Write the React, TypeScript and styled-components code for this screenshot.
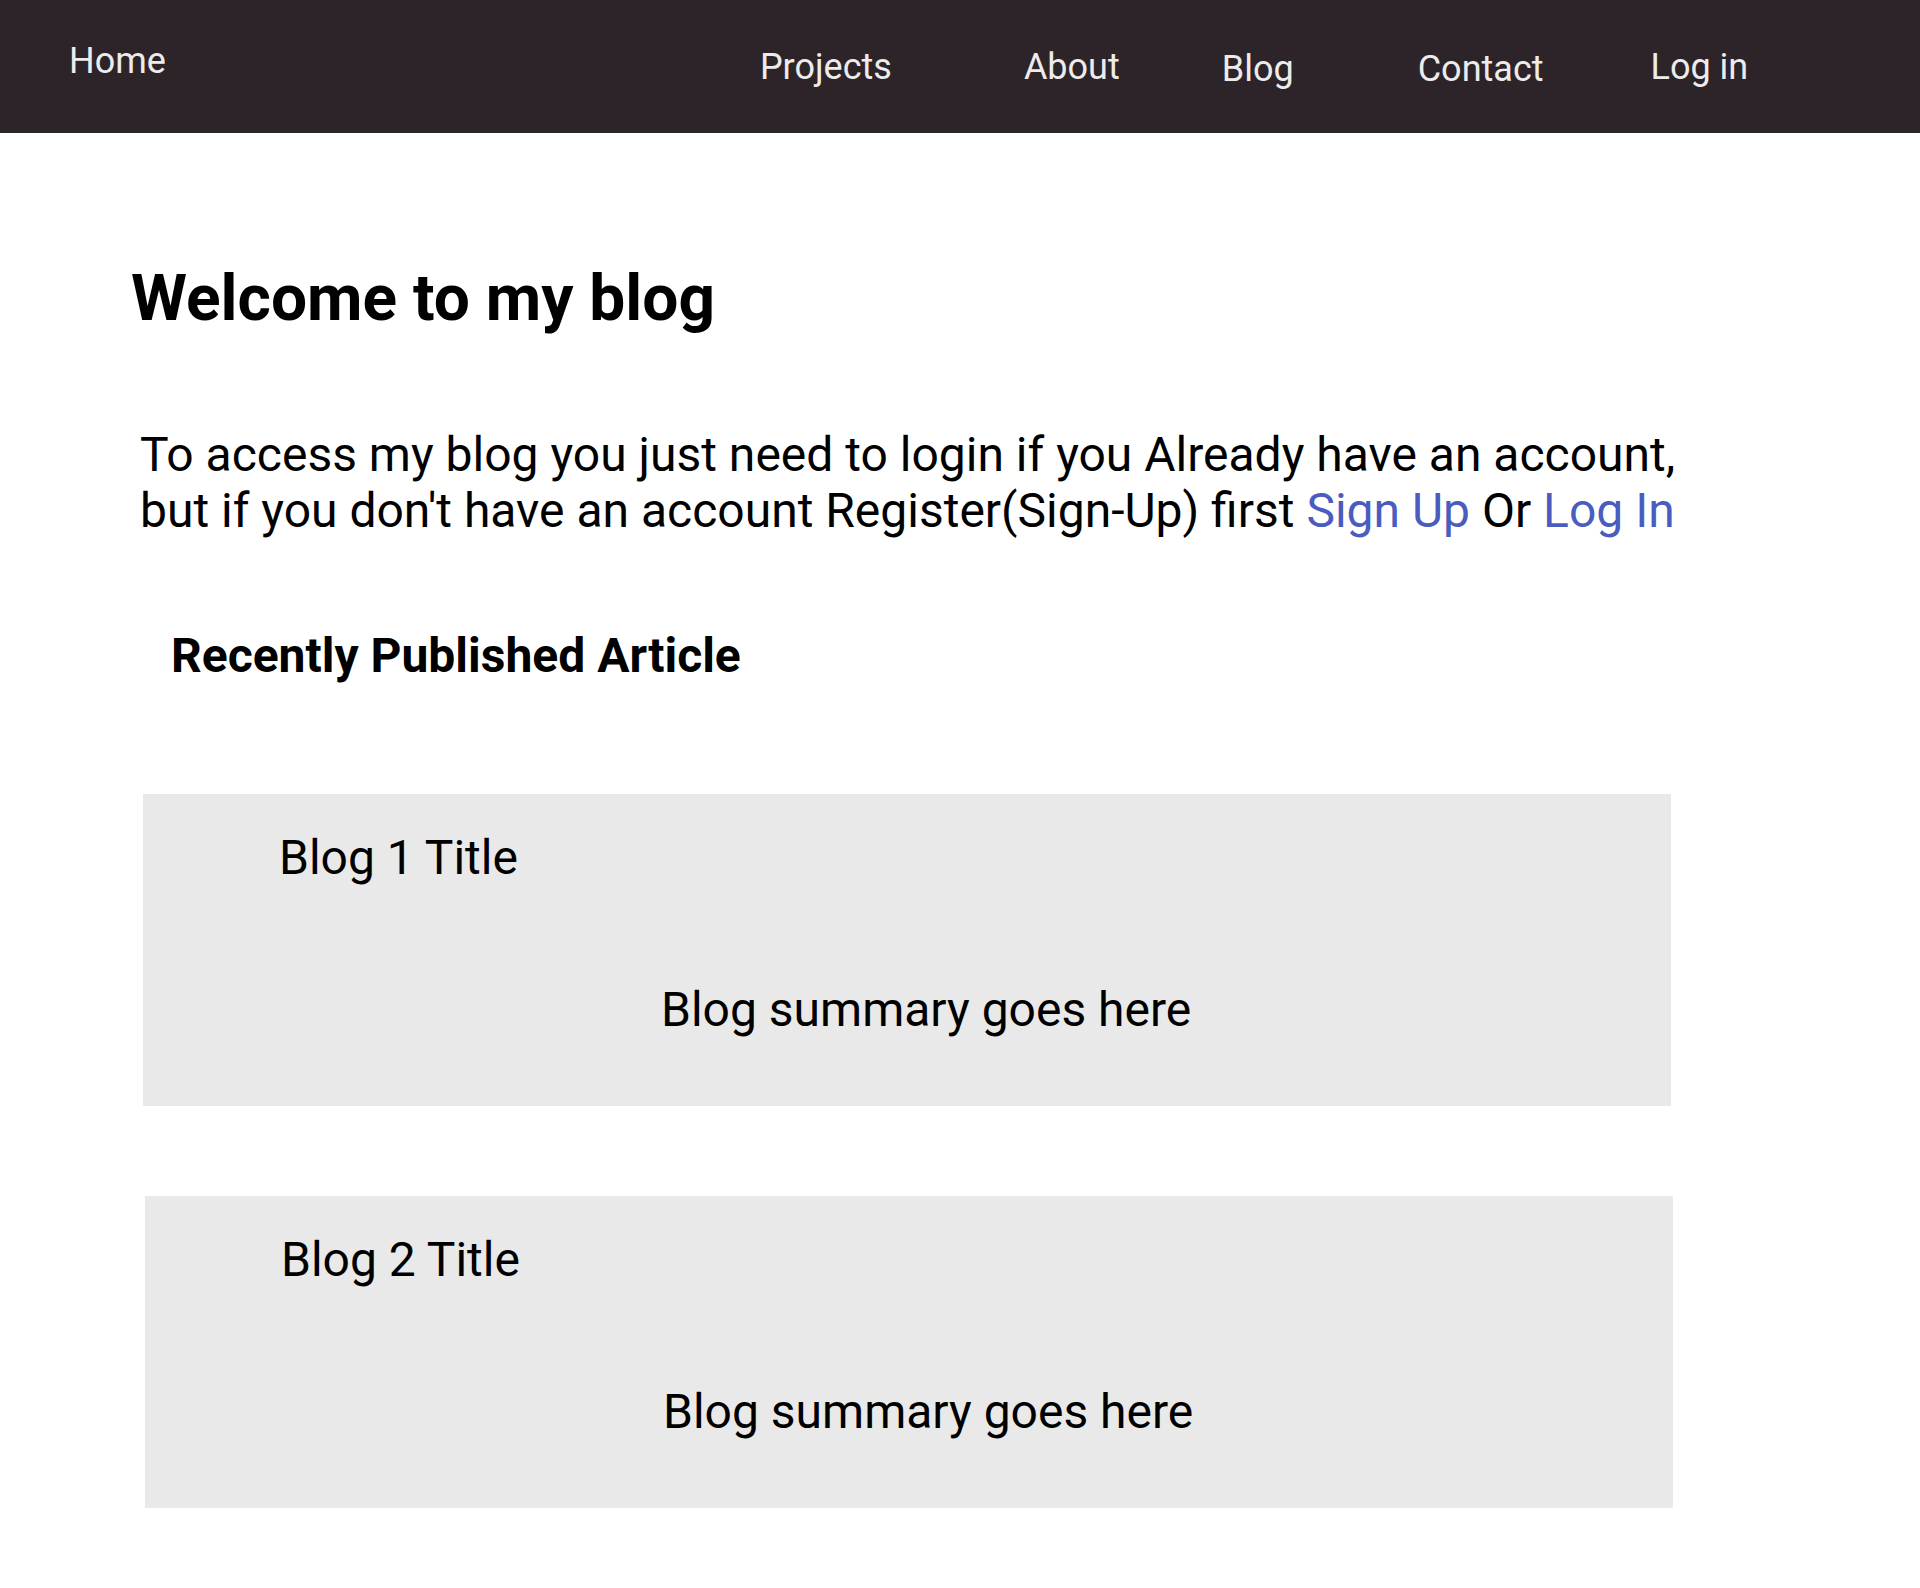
import React from "react";
import styled, { createGlobalStyle } from "styled-components";

const GlobalStyle = createGlobalStyle`
  html, body {
    margin: 0;
    padding: 0;
    background: #ffffff;
  }
  body {
    font-family: Roboto, "Liberation Sans", Arial, sans-serif;
    color: #000000;
  }
  * { box-sizing: border-box; }
`;

const Page = styled.div`
  width: 1920px;
  min-height: 1588px;
  background: #ffffff;
`;

const NavBar = styled.nav`
  display: flex;
  align-items: flex-start;
  height: 133px;
  padding-left: 69px;
  background: #2d2429;
`;

const NavItem = styled.a<{ $ml: number; $mt: number }>`
  display: block;
  margin-left: ${(p) => p.$ml}px;
  margin-top: ${(p) => p.$mt}px;
  font-size: 36px;
  line-height: 42px;
  color: #ececec;
  text-decoration: none;
  white-space: nowrap;
  cursor: pointer;
`;

const Main = styled.main`
  display: flex;
  flex-direction: column;
  align-items: flex-start;
`;

const Heading = styled.h1`
  margin: 128px 0 0 131px;
  font-size: 64px;
  line-height: 75px;
  font-weight: 700;
`;

const Intro = styled.p`
  margin: 91px 0 0 140px;
  font-size: 48px;
  line-height: 56px;
  font-weight: 400;
  white-space: nowrap;
`;

const TextLink = styled.a`
  color: #4a5dbf;
  text-decoration: none;
  cursor: pointer;
`;

const SectionTitle = styled.h2`
  margin: 89px 0 0 171px;
  font-size: 48px;
  line-height: 56px;
  font-weight: 700;
`;

const CardList = styled.section`
  display: flex;
  flex-direction: column;
  gap: 90px;
  margin-top: 110px;
`;

const Card = styled.article<{ $inset: number }>`
  display: flex;
  flex-direction: column;
  width: 1528px;
  margin-left: ${(p) => p.$inset}px;
  padding: 36px 0 68px 0;
  background: #e9e9e9;
`;

const CardTitle = styled.h3`
  margin: 0 0 0 136px;
  font-size: 48px;
  line-height: 56px;
  font-weight: 400;
`;

const CardSummary = styled.p`
  margin: 96px 0 0 518px;
  font-size: 48px;
  line-height: 56px;
  font-weight: 400;
`;

const navItems = [
  { label: "Home", ml: 0, mt: 40 },
  { label: "Projects", ml: 594, mt: 46 },
  { label: "About", ml: 132, mt: 46 },
  { label: "Blog", ml: 102, mt: 48 },
  { label: "Contact", ml: 124, mt: 48 },
  { label: "Log in", ml: 107, mt: 46 },
];

const posts = [
  { title: "Blog 1 Title", summary: "Blog summary goes here", inset: 143 },
  { title: "Blog 2 Title", summary: "Blog summary goes here", inset: 145 },
];

export default function App() {
  return (
    <>
      <GlobalStyle />
      <Page>
        <NavBar>
          {navItems.map((item) => (
            <NavItem key={item.label} $ml={item.ml} $mt={item.mt}>
              {item.label}
            </NavItem>
          ))}
        </NavBar>
        <Main>
          <Heading>Welcome to my blog</Heading>
          <Intro>
            To access my blog you just need to login if you Already have an account,
            <br />
            but if you don't have an account Register(Sign-Up) first{" "}
            <TextLink>Sign Up</TextLink> Or <TextLink>Log In</TextLink>
          </Intro>
          <SectionTitle>Recently Published Article</SectionTitle>
          <CardList>
            {posts.map((post) => (
              <Card key={post.title} $inset={post.inset}>
                <CardTitle>{post.title}</CardTitle>
                <CardSummary>{post.summary}</CardSummary>
              </Card>
            ))}
          </CardList>
        </Main>
      </Page>
    </>
  );
}
